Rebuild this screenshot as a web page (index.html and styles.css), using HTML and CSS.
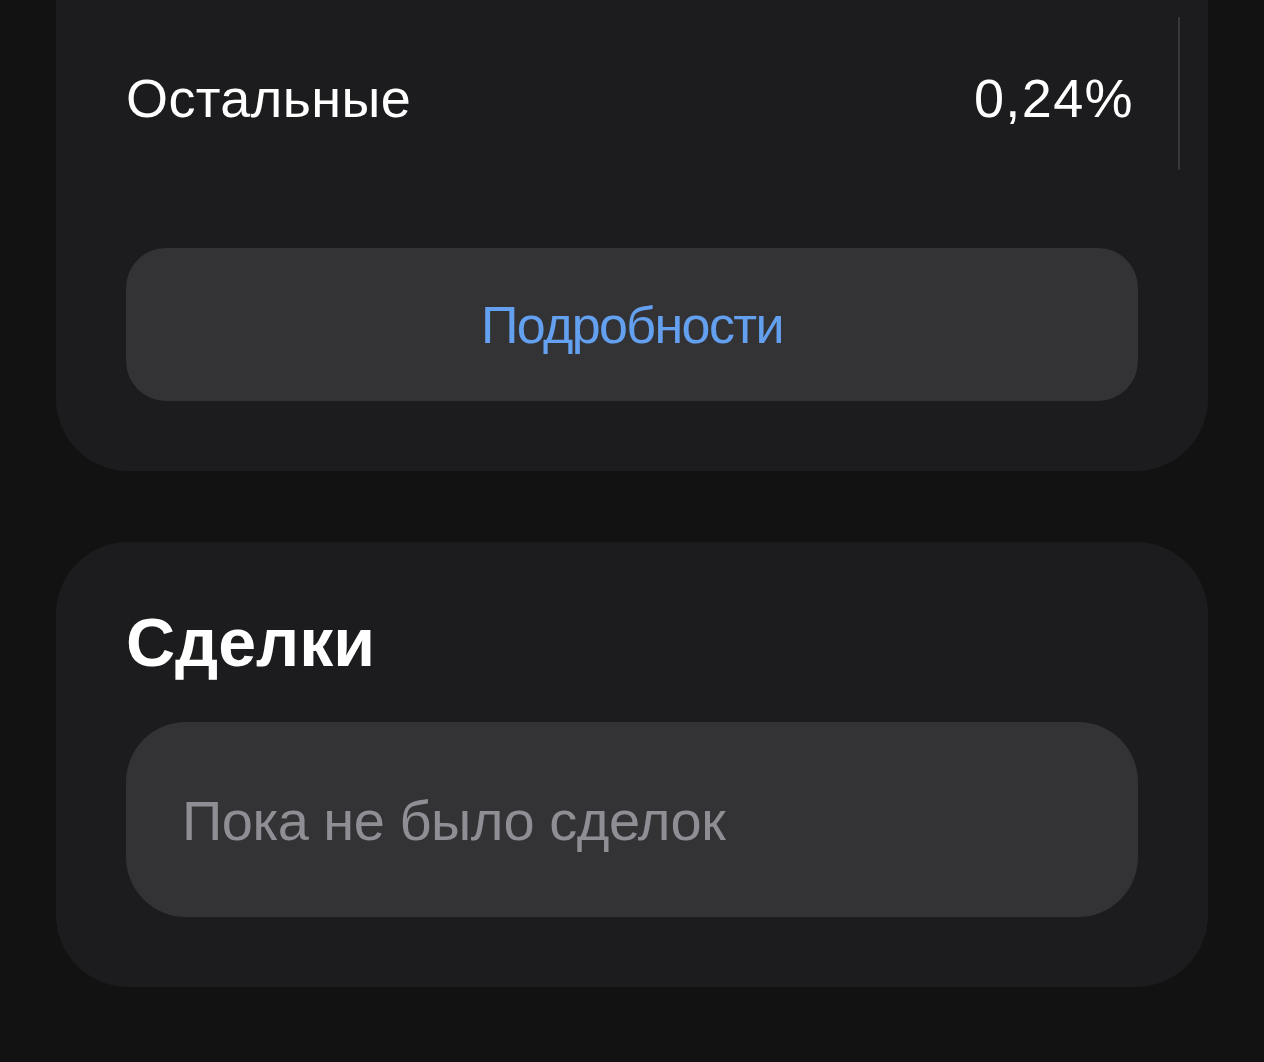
FILE: index.html
```html
<!DOCTYPE html>
<html>
<head>
	<meta charset="utf-8" />
	<title>Портфель</title>
	<link rel="stylesheet" href="styles.css">
</head>
<body>
<div class="page">
	<div class="card card-top">
		<div class="list">
			<div class="list-row">
				<span class="list-name">Остальные</span>
				<span class="list-value">0,24%</span>
			</div>
			<div class="scrollbar"></div>
		</div>
		<div class="btn">Подробности</div>
	</div>

	<div class="card card-deals">
		<h2 class="card-title">Сделки</h2>
		<div class="empty">Пока не было сделок</div>
	</div>
</div>
</body>
</html>
```

FILE: styles.css
```css
* {
	margin: 0;
	padding: 0;
	box-sizing: border-box;
}
body {
	background: #121212;
	font-family: "Liberation Sans", Arial, sans-serif;
	color: #fff;
}
.page {
	padding: 0 56px 74px;
	display: flex;
	flex-direction: column;
	gap: 71px;
}
.card {
	background: #1c1c1e;
	border-radius: 72px;
	padding: 0 70px 70px;
}
.card-top {
	margin-top: -70px;
	padding-top: 70px;
}
.list {
	position: relative;
	margin-bottom: 52px;
}
.list-row {
	height: 196px;
	display: flex;
	align-items: center;
	justify-content: space-between;
	font-size: 54px;
}
.list-name {
	letter-spacing: 0.4px;
}
.list-value {
	margin-right: 4px;
	letter-spacing: 1.4px;
}
.scrollbar {
	position: absolute;
	top: 17px;
	right: -42px;
	width: 2px;
	height: 153px;
	background: #38383b;
	border-radius: 1px;
}
.btn {
	height: 153px;
	background: #333336;
	border-radius: 40px;
	display: flex;
	align-items: center;
	justify-content: center;
	color: #64a0f0;
	font-size: 52px;
	letter-spacing: -1.6px;
}
.card-deals {
	padding-top: 60px;
}
.card-title {
	font-size: 68px;
	font-weight: bold;
	line-height: 80px;
	margin-bottom: 40px;
}
.empty {
	height: 195px;
	background: #333336;
	border-radius: 60px;
	display: flex;
	align-items: center;
	padding: 2px 0 0 56px;
	color: #8e8e94;
	font-size: 56px;
	letter-spacing: -0.5px;
}
```
